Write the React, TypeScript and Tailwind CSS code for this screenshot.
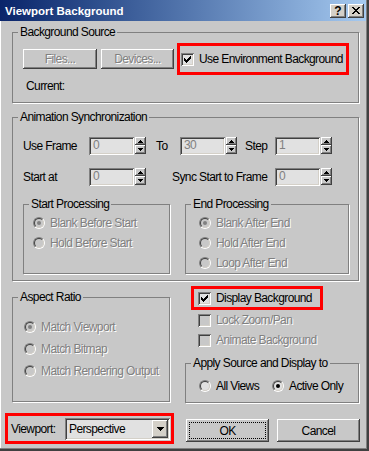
import React from "react";

const dis = "text-[#808080] [text-shadow:1px_1px_0_#ffffff]";
const raised =
  "[box-shadow:inset_-1px_-1px_0_#404040,inset_1px_1px_0_#ffffff,inset_-2px_-2px_0_#808080]";
const sunken =
  "[box-shadow:inset_1px_1px_0_#808080,inset_-1px_-1px_0_#ffffff,inset_2px_2px_0_#404040,inset_-2px_-2px_0_#d4d0c8]";

function Group({
  label,
  className,
  children,
}: {
  label: string;
  className: string;
  children?: React.ReactNode;
}) {
  return (
    <div className={`relative border border-[#808080] shadow-[1px_1px_0_#ffffff] ${className}`}>
      <span className="absolute left-[5px] -top-[8px] bg-[#c8c8c8] px-[2px] leading-[14px] whitespace-nowrap">
        {label}
      </span>
      {children}
    </div>
  );
}

function Btn({ children, className = "", disabled = false }: { children: React.ReactNode; className?: string; disabled?: boolean }) {
  return (
    <div className={`flex items-center justify-center bg-[#c8c8c8] ${raised} ${disabled ? dis : ""} ${className}`}>
      {children}
    </div>
  );
}

function Arrow({ up }: { up?: boolean }) {
  return (
    <div className={`flex items-center justify-center bg-[#c8c8c8] ${raised} ${up ? "h-[8px]" : "h-[9px]"}`}>
      <svg width="5" height="3" viewBox="0 0 5 3">
        {up ? (
          <path d="M2 0h1v1h1v1h1v1H0V2h1V1h1z" fill="#000" />
        ) : (
          <path d="M0 0h5v1H4v1H3v1H2V2H1V1H0z" fill="#000" />
        )}
      </svg>
    </div>
  );
}

function Spinner({ value }: { value: string }) {
  return (
    <div className="flex items-start gap-[1px]">
      <div className={`w-[45px] h-[18px] bg-[#e1e1e1] ${sunken} pl-[4px] pt-[1px] leading-[15px] text-[#808080]`}>
        {value}
      </div>
      <div className="flex flex-col w-[11px]">
        <Arrow up />
        <Arrow />
      </div>
    </div>
  );
}

function Radio({ checked, disabled }: { checked?: boolean; disabled?: boolean }) {
  return (
    <span className="flex w-[12px] h-[12px] shrink-0 rounded-full border border-t-[#808080] border-l-[#808080] border-b-white border-r-white">
      <span
        className={`flex flex-1 items-center justify-center rounded-full border border-t-[#404040] border-l-[#404040] border-b-[#d4d0c8] border-r-[#d4d0c8] ${
          disabled ? "bg-[#c8c8c8]" : "bg-[#e1e1e1]"
        }`}
      >
        {checked && <span className={`w-[4px] h-[4px] rounded-full ${disabled ? "bg-[#808080]" : "bg-black"}`} />}
      </span>
    </span>
  );
}

function Check({ checked, disabled }: { checked?: boolean; disabled?: boolean }) {
  const starts = [2, 3, 4, 3, 2, 1, 0];
  return (
    <span className={`flex w-[13px] h-[13px] shrink-0 items-center justify-center ${sunken} ${disabled ? "bg-[#c8c8c8]" : "bg-[#e1e1e1]"}`}>
      {checked && (
        <svg width="7" height="7" viewBox="0 0 7 7">
          {starts.map((s, i) => (
            <rect key={i} x={i} y={s} width="1" height="3" fill="#000" />
          ))}
        </svg>
      )}
    </span>
  );
}

function RadioRow({ label, checked, disabled, className = "" }: { label: string; checked?: boolean; disabled?: boolean; className?: string }) {
  return (
    <div className={`flex items-center gap-[5px] ${className}`}>
      <Radio checked={checked} disabled={disabled} />
      <span className={disabled ? dis : ""}>{label}</span>
    </div>
  );
}

function CloseGlyph() {
  const rows = ["11000011", "01100110", "00111100", "00011000", "00111100", "01100110", "11000011"];
  return (
    <svg width="8" height="7" viewBox="0 0 8 7">
      {rows.map((r, y) =>
        r.split("").map((c, x) => (c === "1" ? <rect key={`${x}-${y}`} x={x} y={y} width="1" height="1" fill="#000" /> : null))
      )}
    </svg>
  );
}

const titleBtn =
  "flex w-[16px] h-[14px] items-center justify-center bg-[#d4d0c8] [box-shadow:inset_-1px_-1px_0_#404040,inset_1px_1px_0_#ffffff,inset_-2px_-2px_0_#808080,inset_2px_2px_0_#d4d0c8]";

export default function App() {
  return (
    <div className="w-[369px] h-[451px] bg-[#c8c8c8] font-['Liberation_Sans',Arial,sans-serif] text-[12px] tracking-[-0.6px] leading-[14px] text-black flex flex-col [box-shadow:inset_-2px_-2px_0_#404040,inset_-3px_-3px_0_#808080,inset_1px_0_0_#ffffff]">
      {/* title bar */}
      <div className="h-[21px] mr-[3px] flex items-center bg-linear-to-r from-[#0a246a] to-[#a6caf0] pl-[5px] pr-[2px]">
        <span className="flex-1 text-white font-bold text-[11.5px] tracking-normal">Viewport Background</span>
        <div className={titleBtn}>
          <span className="font-bold text-[12px] leading-[12px] tracking-normal">?</span>
        </div>
        <div className={`${titleBtn} ml-[2px]`}>
          <CloseGlyph />
        </div>
      </div>

      {/* Background Source */}
      <Group label="Background Source" className="ml-[12px] mt-[11px] w-[347px] h-[71px] pt-[10px] pl-[10px]">
        <div className="flex items-center">
          <Btn disabled className="w-[74px] h-[20px]">Files...</Btn>
          <Btn disabled className="ml-[4px] w-[73px] h-[20px]">Devices...</Btn>
          <div className="ml-[3px] w-[172px] h-[32px] border-[3px] border-[#ff0000] flex items-center pl-[1px] gap-[5px]">
            <Check checked />
            <span>Use Environment Background</span>
          </div>
        </div>
        <div className="mt-[4px] ml-[3px]">Current:</div>
      </Group>

      {/* Animation Synchronization */}
      <Group label="Animation Synchronization" className="ml-[12px] mt-[14px] w-[347px] h-[164px] pt-[19px] pl-[10px]">
        <div className="flex items-center h-[18px]">
          <span className="w-[66px]">Use Frame</span>
          <Spinner value="0" />
          <span className="ml-[10px] w-[24px]">To</span>
          <Spinner value="30" />
          <span className="ml-[8px] w-[30px]">Step</span>
          <Spinner value="1" />
        </div>
        <div className="flex items-center h-[18px] mt-[13px]">
          <span className="w-[66px]">Start at</span>
          <Spinner value="0" />
          <span className="ml-[26px] w-[103px]">Sync Start to Frame</span>
          <Spinner value="0" />
        </div>
        <div className="flex mt-[18px]">
          <Group label="Start Processing" className="w-[147px] h-[70px] pt-[8px] pl-[9px]">
            <RadioRow className="h-[20px]" label="Blank Before Start" checked disabled />
            <RadioRow className="h-[20px]" label="Hold Before Start" disabled />
          </Group>
          <Group label="End Processing" className="ml-[15px] w-[164px] h-[70px] pt-[8px] pl-[13px]">
            <RadioRow className="h-[20px]" label="Blank After End" checked disabled />
            <RadioRow className="h-[20px]" label="Hold After End" disabled />
            <RadioRow className="h-[20px]" label="Loop After End" disabled />
          </Group>
        </div>
      </Group>

      {/* aspect + display */}
      <div className="flex items-start ml-[12px]">
        <Group label="Aspect Ratio" className="mt-[16px] w-[158px] h-[105px] pt-[18px] pl-[11px]">
          <RadioRow className="h-[22px]" label="Match Viewport" checked disabled />
          <RadioRow className="h-[22px]" label="Match Bitmap" disabled />
          <RadioRow className="h-[22px]" label="Match Rendering Output" disabled />
        </Group>
        <div className="ml-[15px] w-[174px] flex flex-col pt-[5px]">
          <div className="ml-[6px] w-[132px] h-[24px] border-[3px] border-[#ff0000] flex items-center pl-[4px] gap-[5px]">
            <Check checked />
            <span>Display Background</span>
          </div>
          <div className="pl-[13px] h-[20px] flex items-center gap-[5px]">
            <Check disabled />
            <span className={dis}>Lock Zoom/Pan</span>
          </div>
          <div className="pl-[13px] h-[20px] flex items-center gap-[5px]">
            <Check disabled />
            <span className={dis}>Animate Background</span>
          </div>
          <Group label="Apply Source and Display to" className="mt-[13px] w-[174px] h-[40px] pt-[12px] pl-[13px]">
            <div className="flex h-[20px] items-center">
              <RadioRow className="w-[73px]" label="All Views" />
              <RadioRow label="Active Only" checked />
            </div>
          </Group>
        </div>
      </div>

      {/* bottom row */}
      <div className="flex items-start ml-[5px] mt-[10px]">
        <div className="w-[169px] h-[31px] border-[3px] border-[#ff0000] flex items-center pl-[3px]">
          <span className="w-[54px]">Viewport:</span>
          <div className={`w-[105px] h-[22px] bg-[#e1e1e1] ${sunken} flex items-center pl-[4px] pr-[2px]`}>
            <span className="flex-1">Perspective</span>
            <div className={`w-[16px] h-[18px] flex items-center justify-center bg-[#d4d0c8] ${raised}`}>
              <svg width="7" height="4" viewBox="0 0 7 4">
                <path d="M0 0h7v1H6v1H5v1H4v1H3V3H2V2H1V1H0z" fill="#000" />
              </svg>
            </div>
          </div>
        </div>
        <Btn className="ml-[12px] mt-[6px] w-[83px] h-[23px] outline-1 outline-dotted outline-black -outline-offset-4">OK</Btn>
        <Btn className="ml-[8px] mt-[6px] w-[83px] h-[23px]">Cancel</Btn>
      </div>
    </div>
  );
}
